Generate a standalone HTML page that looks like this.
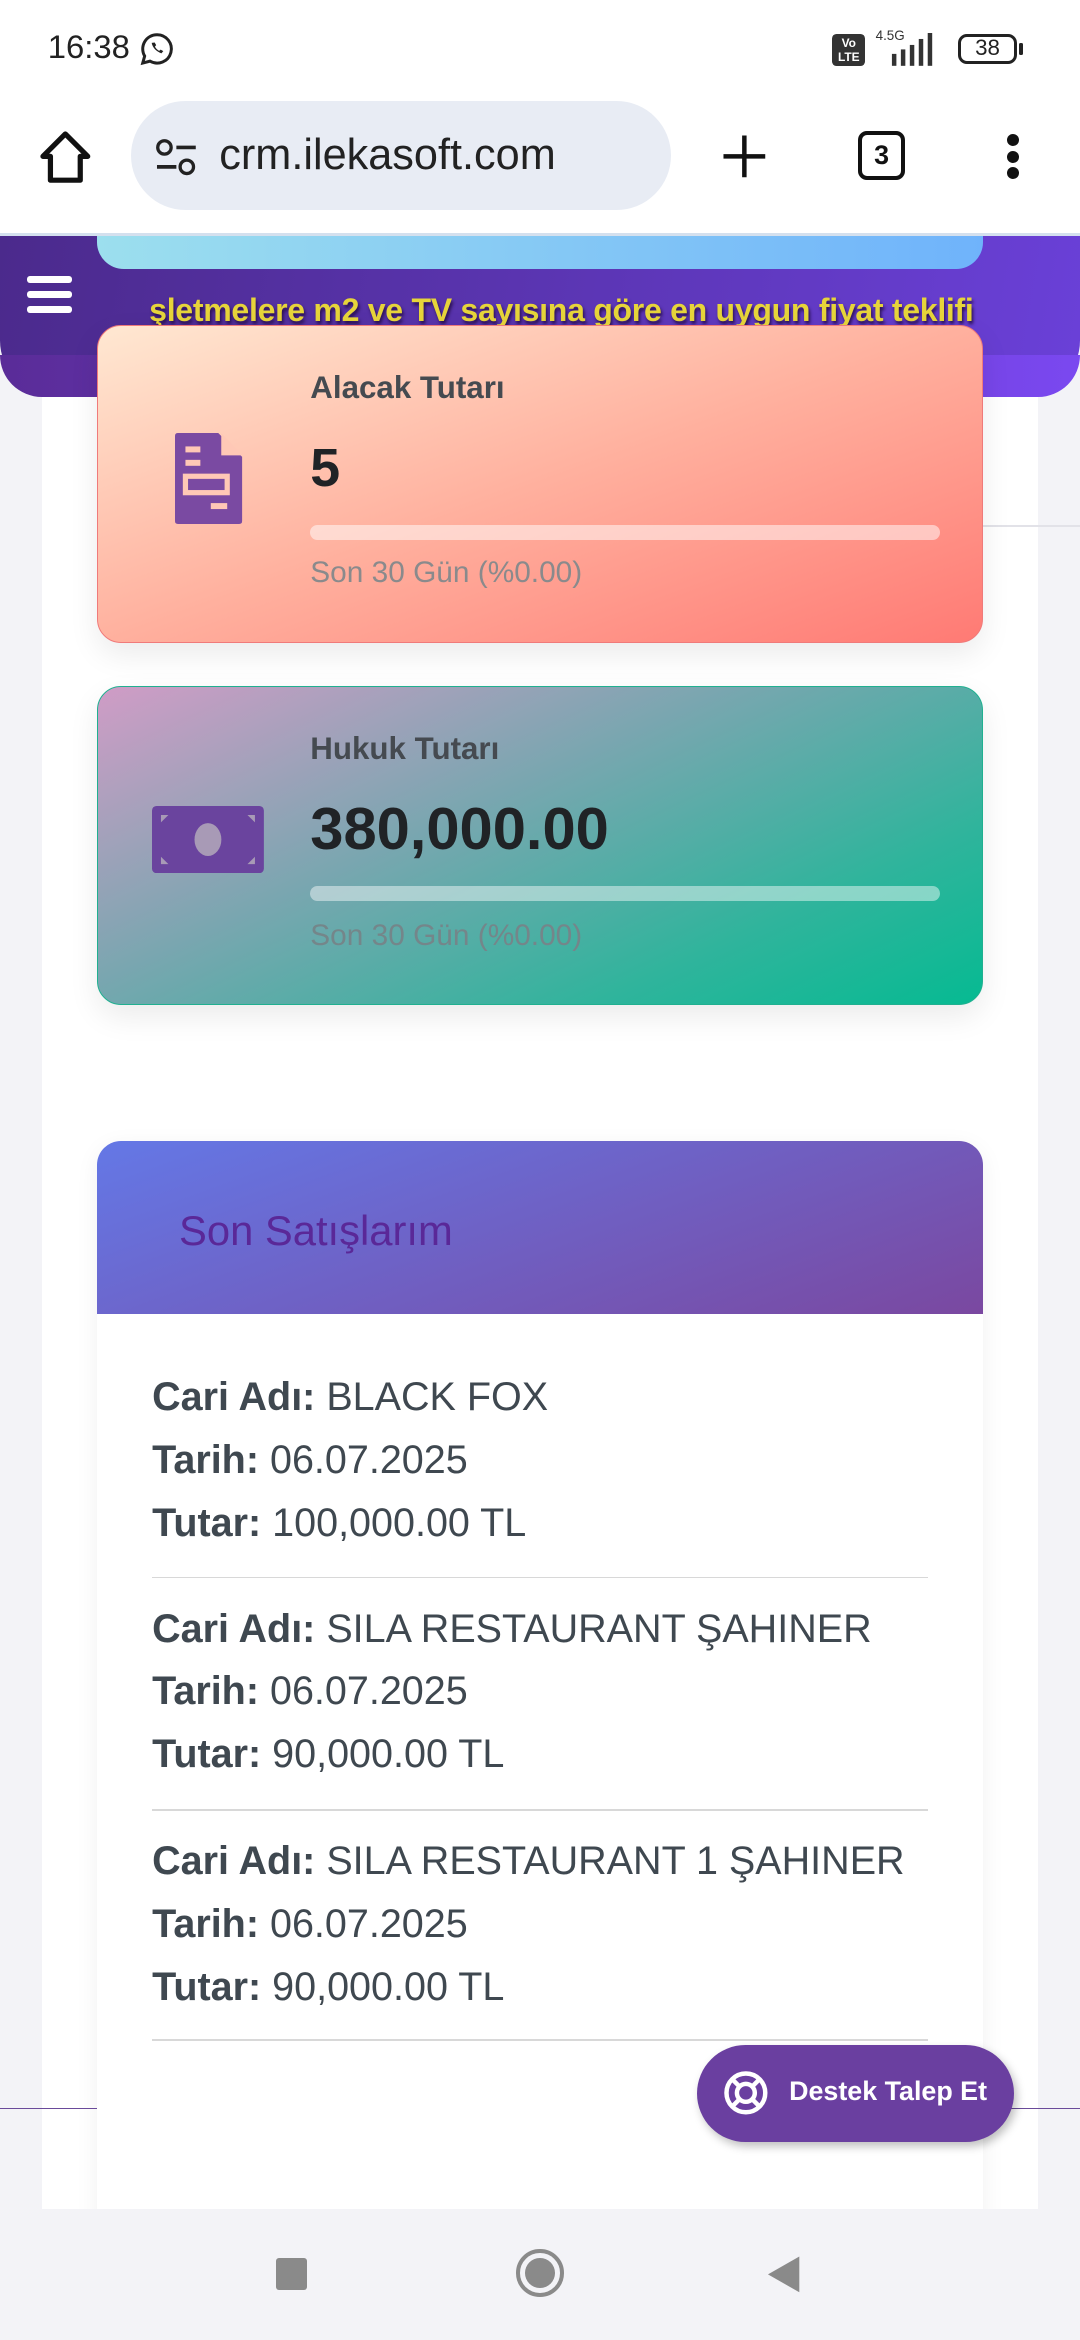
<!DOCTYPE html>
<html><head><meta charset="utf-8">
<style>
html,body{margin:0;padding:0;}
body{width:724px;height:1568px;zoom:1.49171;overflow:hidden;background:#f3f3f7;font-family:"Liberation Sans",sans-serif;position:relative;}
.a{position:absolute;}
.t{position:absolute;white-space:nowrap;}
</style></head><body>
<!-- status bar -->
<div class="a" style="left:0;top:0;width:724px;height:158px;background:#fff;"></div>
<div class="t" style="left:32px;top:19px;font-size:22px;color:#222;">16:38</div>
<svg class="a" style="left:93px;top:21px" width="24" height="24" viewBox="0 0 24 24"><path d="M12 2.5a9.5 9.5 0 0 0-8.2 14.3L2.5 21.5l4.9-1.3A9.5 9.5 0 1 0 12 2.5z" fill="none" stroke="#222" stroke-width="2"/><path d="M8.5 8c.5 3 3 5.8 6.5 7l1.3-1.5-1.8-1-1 .8c-1.2-.6-2.3-1.7-2.8-2.8l.8-1-1-1.8z" fill="#222"/></svg>
<div class="a" style="left:558px;top:23px;width:22px;height:21px;background:#333;border-radius:3px;color:#fff;font-size:8px;line-height:9px;text-align:center;font-weight:bold;padding-top:2px;box-sizing:border-box">Vo<br>LTE</div>
<div class="t" style="left:587px;top:19px;font-size:9px;color:#333">4.5G</div>
<svg class="a" style="left:588px;top:22px" width="45" height="23"><rect x="10" y="14" width="3" height="8" fill="#333"/><rect x="16" y="11" width="3" height="11" fill="#333"/><rect x="22" y="8" width="3" height="14" fill="#333"/><rect x="28" y="4" width="3" height="18" fill="#333"/><rect x="34" y="0" width="3" height="22" fill="#333"/></svg>
<div class="a" style="left:642px;top:23px;width:40px;height:20px;border:2.5px solid #222;border-radius:6px;box-sizing:border-box;font-size:15px;text-align:center;line-height:15px;color:#222">38</div>
<div class="a" style="left:683px;top:29px;width:3px;height:8px;background:#222;border-radius:1px"></div>
<!-- browser bar -->
<svg class="a" style="left:25px;top:86px" width="38" height="40" viewBox="0 0 38 40"><path d="M19 4 L34 19 H29 V35 H9 V19 H4 Z" fill="none" stroke="#111" stroke-width="3.5" stroke-linejoin="round"/></svg>
<div class="a" style="left:88px;top:68px;width:362px;height:73px;background:#e8ecf4;border-radius:37px"></div>
<svg class="a" style="left:103px;top:92px" width="30" height="28"><circle cx="7" cy="7" r="4.5" fill="none" stroke="#222" stroke-width="2.2"/><line x1="15" y1="7" x2="28" y2="7" stroke="#222" stroke-width="2.5"/><line x1="2" y1="20" x2="15" y2="20" stroke="#222" stroke-width="2.5"/><circle cx="22" cy="20" r="4.5" fill="none" stroke="#222" stroke-width="2.2"/></svg>
<div class="t" style="left:147px;top:88px;font-size:29px;color:#222">crm.ilekasoft.com</div>
<svg class="a" style="left:482px;top:88px" width="34" height="34"><path d="M17 3V31M3 17H31" stroke="#111" stroke-width="3"/></svg>
<div class="a" style="left:575px;top:88px;width:32px;height:33px;border:3px solid #111;border-radius:6px;box-sizing:border-box;text-align:center;font-size:18px;line-height:27px;font-weight:bold;color:#111">3</div>
<div class="a" style="left:675px;top:90px;width:8px;height:8px;border-radius:4px;background:#111"></div>
<div class="a" style="left:675px;top:101px;width:8px;height:8px;border-radius:4px;background:#111"></div>
<div class="a" style="left:675px;top:112px;width:8px;height:8px;border-radius:4px;background:#111"></div>
<div class="a" style="left:0;top:156px;width:724px;height:2px;background:#d4e0ee"></div>
<!-- page -->
<div class="a" style="left:28px;top:250px;width:668px;height:1240px;background:#fff"></div>
<div class="a" style="left:659px;top:352px;width:65px;height:1px;background:#e2e2e8"></div>
<div class="a" style="left:0;top:158px;width:724px;height:108px;background:linear-gradient(100deg,#4b2a8c,#6a40d8);border-radius:0 0 38px 38px"></div>
<div class="a" style="left:0;top:238px;width:724px;height:28px;background:linear-gradient(90deg,#5a2c98,#7a48f0);border-radius:0 0 38px 38px"></div>
<div class="a" style="left:65px;top:158px;width:594px;height:22px;background:linear-gradient(90deg,#9cdfee,#6fb3fb);border-radius:0 0 18px 18px"></div>
<div class="a" style="left:18px;top:185px;width:30px;height:5px;background:#fff;border-radius:2px"></div>
<div class="a" style="left:18px;top:195px;width:30px;height:5px;background:#fff;border-radius:2px"></div>
<div class="a" style="left:18px;top:205px;width:30px;height:5px;background:#fff;border-radius:2px"></div>
<div class="t" style="left:100px;top:196px;font-size:21.5px;font-weight:bold;color:#e6d43a;text-shadow:1px 2px 2px #2a1050;width:580px;overflow:hidden;letter-spacing:-0.2px">şletmelere m2 ve TV sayısına göre en uygun fiyat teklifi</div>
<!-- card 1 -->
<div class="a" style="left:65px;top:218px;width:594px;height:213px;box-sizing:border-box;border:1px solid #f07a7a;border-radius:16px;background:linear-gradient(160deg,#ffe8d2 0%,#ffb09e 50%,#ff7a74 100%);box-shadow:0 8px 20px rgba(0,0,0,.08)"></div>
<svg class="a" style="left:117px;top:290px" width="46" height="61" viewBox="0 0 46 61"><path d="M0 2Q0 0 2 0H29L45 16V59Q45 61 43 61H2Q0 61 0 59Z" fill="#7a4aa2"/><path d="M31 0L45 15H31Z" fill="#ffc8b6"/><rect x="7" y="9" width="10" height="4" fill="#ffc8b6"/><rect x="7" y="18" width="10" height="4" fill="#ffc8b6"/><rect x="7" y="29" width="28" height="11" fill="none" stroke="#ffc8b6" stroke-width="3.5"/><rect x="24" y="47" width="11" height="4" fill="#ffc8b6"/></svg>
<div class="t" style="left:208px;top:248px;font-size:21px;font-weight:bold;color:#454a50">Alacak Tutarı</div>
<div class="t" style="left:208px;top:293px;font-size:36px;font-weight:bold;color:#202326">5</div>
<div class="a" style="left:208px;top:352px;width:422px;height:10px;border-radius:5px;background:rgba(255,255,255,.5)"></div>
<div class="t" style="left:208px;top:373px;font-size:20px;color:#8a8a8c">Son 30 Gün (%0.00)</div>
<!-- card 2 -->
<div class="a" style="left:65px;top:460px;width:594px;height:214px;box-sizing:border-box;border:1px solid #20b090;border-radius:16px;background:linear-gradient(155deg,#d09cc6 0%,#7aa6b0 40%,#30b49c 75%,#06ba92 100%);box-shadow:0 8px 20px rgba(0,0,0,.08)"></div>
<svg class="a" style="left:102px;top:540px" width="75" height="45" viewBox="0 0 75 45"><rect x="0" y="0" width="75" height="45" rx="3" fill="#6a449e"/><ellipse cx="37.5" cy="22.5" rx="9" ry="11" fill="#a89ab6"/><path d="M6 6h5l-5 5zM69 6h-5l5 5zM6 39h5l-5-5zM69 39h-5l5-5z" fill="#a89ab6"/></svg>
<div class="t" style="left:208px;top:490px;font-size:21px;font-weight:bold;color:#454a50">Hukuk Tutarı</div>
<div class="t" style="left:208px;top:532px;font-size:40px;font-weight:bold;color:#202326">380,000.00</div>
<div class="a" style="left:208px;top:594px;width:422px;height:10px;border-radius:5px;background:rgba(255,255,255,.45)"></div>
<div class="t" style="left:208px;top:616px;font-size:20px;color:#74868a">Son 30 Gün (%0.00)</div>
<!-- sales -->
<div class="a" style="left:65px;top:765px;width:594px;height:730px;background:#fff;border-radius:16px 16px 0 0;box-shadow:0 4px 16px rgba(0,0,0,.06)"></div>
<div class="a" style="left:65px;top:765px;width:594px;height:116px;background:linear-gradient(160deg,#6478e6,#7a48a0);border-radius:16px 16px 0 0"></div>
<div class="t" style="left:120px;top:809px;font-size:28px;color:#5a2898">Son Satışlarım</div>
<div class="t" style="left:102px;top:916px;font-size:26.5px;color:#3f4850;line-height:42px"><b>Cari Adı:</b> BLACK FOX<br><b>Tarih:</b> 06.07.2025<br><b>Tutar:</b> 100,000.00 TL</div>
<div class="a" style="left:102px;top:1057px;width:520px;height:1px;background:#d8d8d8"></div>
<div class="t" style="left:102px;top:1071px;font-size:26.5px;color:#3f4850;line-height:42px"><b>Cari Adı:</b> SILA RESTAURANT ŞAHINER<br><b>Tarih:</b> 06.07.2025<br><b>Tutar:</b> 90,000.00 TL</div>
<div class="a" style="left:102px;top:1213px;width:520px;height:1px;background:#d8d8d8"></div>
<div class="t" style="left:102px;top:1227px;font-size:26.5px;color:#3f4850;line-height:42px"><b>Cari Adı:</b> SILA RESTAURANT 1 ŞAHINER<br><b>Tarih:</b> 06.07.2025<br><b>Tutar:</b> 90,000.00 TL</div>
<div class="a" style="left:102px;top:1367px;width:520px;height:1px;background:#d8d8d8"></div>
<div class="a" style="left:0;top:1413px;width:65px;height:1px;background:#6a4a9a"></div>
<div class="a" style="left:659px;top:1413px;width:65px;height:1px;background:#6a4a9a"></div>
<!-- button -->
<div class="a" style="left:467px;top:1371px;width:213px;height:65px;background:#6a3fa0;border-radius:33px;box-shadow:2px 3px 6px rgba(0,0,0,.25)"></div>
<svg class="a" style="left:484px;top:1387px" width="32" height="32" viewBox="0 0 32 32"><circle cx="16" cy="16" r="13" fill="none" stroke="#fff" stroke-width="3"/><circle cx="16" cy="16" r="6" fill="none" stroke="#fff" stroke-width="3"/><path d="M7 7l5 5M25 7l-5 5M7 25l5-5M25 25l-5-5" stroke="#fff" stroke-width="3"/></svg>
<div class="t" style="left:529px;top:1392px;font-size:18px;font-weight:bold;color:#fff">Destek Talep Et</div>
<!-- nav -->
<div class="a" style="left:0;top:1481px;width:724px;height:87px;background:#f3f3f7"></div>
<div class="a" style="left:185px;top:1514px;width:21px;height:21px;background:#8a8a8a;border-radius:2px"></div>
<div class="a" style="left:346px;top:1508px;width:32px;height:32px;border:3px solid #8a8a8a;border-radius:50%;box-sizing:border-box"></div>
<div class="a" style="left:352px;top:1514px;width:20px;height:20px;background:#8a8a8a;border-radius:50%"></div>
<svg class="a" style="left:513px;top:1512px" width="24" height="26"><path d="M23 1V25L2 13Z" fill="#8a8a8a"/></svg>
</body></html>
